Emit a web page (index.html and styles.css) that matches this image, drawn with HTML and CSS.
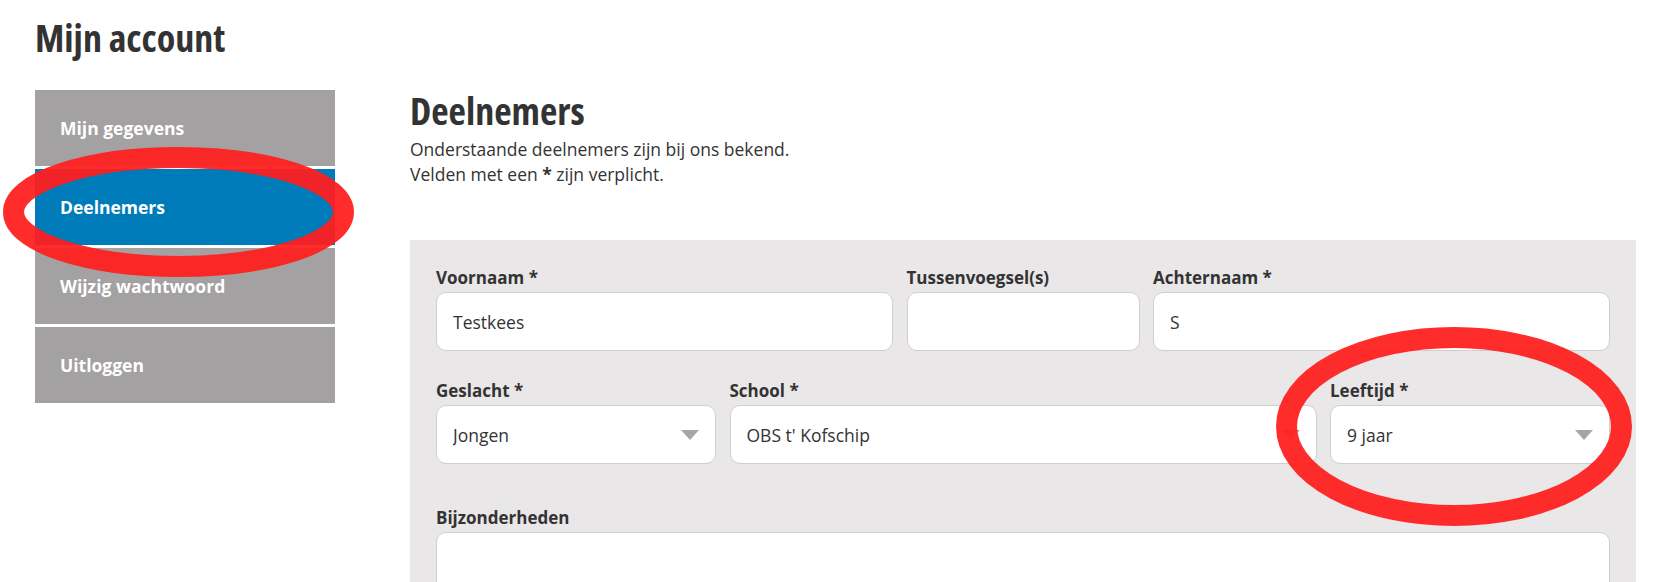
FILE: index.html
```html
<!DOCTYPE html>
<html lang="nl">
<head>
  <meta charset="UTF-8">
  <meta name="viewport" content="width=device-width, initial-scale=1.0">
  <title>Mijn account - Deelnemers</title>
  <link rel="stylesheet" href="styles.css">
</head>
<body>
  <div class="page">
    <h1>Mijn account</h1>

    <div class="account">
      <nav class="account-menu">
        <a href="#">Mijn gegevens</a>
        <a href="#" class="active">Deelnemers</a>
        <a href="#">Wijzig wachtwoord</a>
        <a href="#">Uitloggen</a>
      </nav>

      <div class="account-main">
        <h2>Deelnemers</h2>
        <p class="intro">Onderstaande deelnemers zijn bij ons bekend.<br>Velden met een <strong>*</strong> zijn verplicht.</p>

        <form class="participant">
          <div class="row row-names">
            <div class="field">
              <label>Voornaam *</label>
              <input type="text" value="Testkees">
            </div>
            <div class="field">
              <label>Tussenvoegsel(s)</label>
              <input type="text" value="">
            </div>
            <div class="field">
              <label>Achternaam *</label>
              <input type="text" value="S">
            </div>
          </div>

          <div class="row row-info">
            <div class="field">
              <label>Geslacht *</label>
              <div class="select">
                <select><option>Jongen</option><option>Meisje</option></select>
              </div>
            </div>
            <div class="field">
              <label>School *</label>
              <div class="select">
                <select><option>OBS t' Kofschip</option></select>
              </div>
            </div>
            <div class="field">
              <label>Leeftijd *</label>
              <div class="select">
                <select><option>9 jaar</option></select>
              </div>
            </div>
          </div>

          <div class="field field-notes">
            <label>Bijzonderheden</label>
            <textarea></textarea>
          </div>
        </form>
      </div>
    </div>
  </div>

  <svg class="marks" width="1671" height="582" viewBox="0 0 1671 582">
    <ellipse cx="178.5" cy="212" rx="165" ry="54.5" />
    <ellipse cx="1454" cy="426.5" rx="167.5" ry="89" />
  </svg>
</body>
</html>
```

FILE: styles.css
```css
body {
  margin: 0;
  font-family: 'Open Sans', 'Liberation Sans', sans-serif;
  color: #333;
  background-color: #fff;
  position: relative;
  overflow: hidden;
}
.page {
  padding: 14px 35px 0;
}
h1, h2 {
  margin: 0;
  font-weight: 700;
  font-stretch: 75%;
  font-size: 38px;
  color: #333;
}
h1 {
  line-height: 46px;
}
.account {
  display: flex;
  gap: 75px;
  margin-top: 30px;
}
.account-menu {
  width: 300px;
  flex-shrink: 0;
  display: flex;
  flex-direction: column;
  gap: 3px;
}
.account-menu a {
  display: block;
  height: 76px;
  line-height: 76px;
  padding-left: 25px;
  background-color: #a3a1a2;
  color: #fff;
  font-size: 17.5px;
  font-weight: 700;
  text-decoration: none;
}
.account-menu a.active {
  background-color: #007bb9;
}
.account-main {
  flex: 1;
}
.account-main h2 {
  line-height: 40px;
}
.intro {
  margin: 7px 0 0;
  font-size: 17.5px;
  line-height: 24.5px;
}
.participant {
  margin-top: 54px;
  background-color: #e9e7e8;
  padding: 28px 26px 40px;
}
.row {
  display: grid;
  column-gap: 13.5px;
}
.row-names {
  grid-template-columns: 1fr 233px 1fr;
}
.row-info {
  grid-template-columns: 280px 1fr 280px;
  margin-top: 30px;
}
.field-notes {
  margin-top: 44px;
}
.field label {
  display: block;
  font-size: 17px;
  font-weight: 700;
  line-height: 20px;
  margin-bottom: 4px;
}
.field input,
.field select,
.field textarea {
  display: block;
  box-sizing: border-box;
  width: 100%;
  height: 59px;
  padding: 0 16px;
  border: 1px solid #cfcfcf;
  border-radius: 10px;
  background-color: #fff;
  font-family: inherit;
  font-size: 17.5px;
  color: #333;
  outline: none;
}
.field select {
  appearance: none;
  -webkit-appearance: none;
  padding-right: 45px;
}
.field textarea {
  height: 130px;
  resize: none;
}
.select {
  position: relative;
}
.select::after {
  content: "";
  position: absolute;
  right: 17px;
  top: 25px;
  border-left: 9px solid transparent;
  border-right: 9px solid transparent;
  border-top: 10px solid #a6a6a6;
  pointer-events: none;
}
.marks {
  position: absolute;
  top: 0;
  left: 0;
  pointer-events: none;
}
.marks ellipse {
  fill: none;
  stroke: #ff1f1f;
  stroke-width: 21;
  opacity: 0.94;
}
```
